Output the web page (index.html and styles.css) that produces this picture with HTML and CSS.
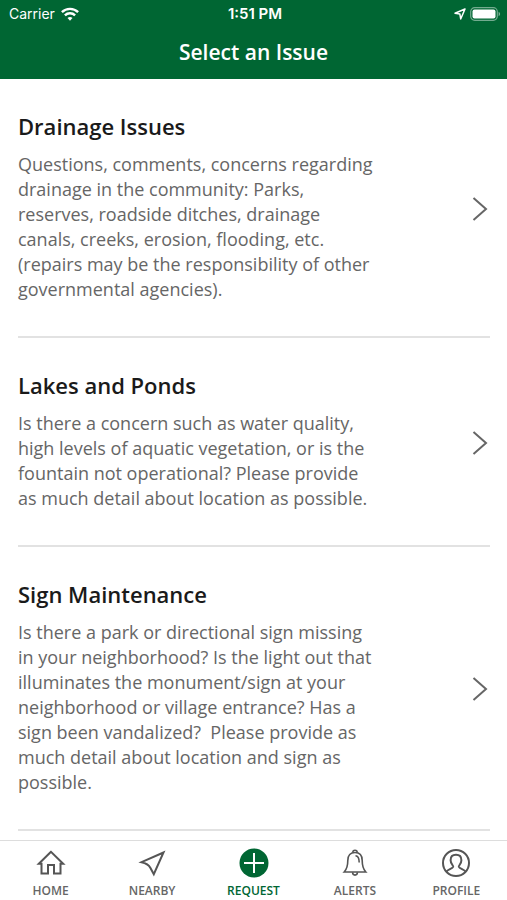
FILE: index.html
```html
<!DOCTYPE html>
<html lang="en">
  <head>
    <meta charset="UTF-8" />
    <meta name="viewport" content="width=device-width, initial-scale=1.0" />
    <title>Select an Issue</title>
    <link rel="stylesheet" href="styles.css">
  </head>
  <body>
    <header class="header">
      <div class="status">
        <div class="status-left">
          <span>Carrier</span>
          <svg width="18" height="14" viewBox="0 0 18 14" fill="none" stroke="#fff" stroke-width="2.4">
            <path d="M0.9 5.2a11.5 11.5 0 0 1 16.2 0" />
            <path d="M3.9 8.4a7.2 7.2 0 0 1 10.2 0" />
            <path d="M9 13.7l-2.5-2.6a3.6 3.6 0 0 1 5 0z" fill="#fff" stroke="none" />
          </svg>
        </div>
        <span class="time">1:51 PM</span>
        <div class="status-right">
          <svg width="12" height="12" viewBox="0 0 12 12" fill="none" stroke="#fff" stroke-width="1.5" stroke-linejoin="round">
            <path d="M11 1L1 5.3l4.9.8.8 4.9z" />
          </svg>
          <svg width="31" height="14" viewBox="0 0 31 14">
            <rect x="0.7" y="0.7" width="26.6" height="12.6" rx="4" fill="none" stroke="#fff" stroke-opacity="0.45" stroke-width="1.2" />
            <rect x="2.5" y="2.5" width="23" height="9" rx="2" fill="#fff" />
            <path d="M28.6 4.8c2 .8 2 3.6 0 4.4z" fill="#fff" fill-opacity="0.5" />
          </svg>
        </div>
      </div>
      <h1>Select an Issue</h1>
    </header>

    <main class="list">
      <a class="issue" href="#drainage">
        <div class="issue-text">
          <h2>Drainage Issues</h2>
          <p>Questions, comments, concerns regarding drainage in the community: Parks, reserves, roadside ditches, drainage canals, creeks, erosion, flooding, etc. (repairs may be the responsibility of other governmental agencies).</p>
        </div>
        <svg class="chevron" width="16" height="24" viewBox="0 0 16 24"><path d="M1.5 1L14 12L1.5 23" /></svg>
      </a>
      <a class="issue" href="#lakes">
        <div class="issue-text">
          <h2>Lakes and Ponds</h2>
          <p>Is there a concern such as water quality, high levels of aquatic vegetation, or is the fountain not operational? Please provide as much detail about location as possible.</p>
        </div>
        <svg class="chevron" width="16" height="24" viewBox="0 0 16 24"><path d="M1.5 1L14 12L1.5 23" /></svg>
      </a>
      <a class="issue" href="#signs">
        <div class="issue-text">
          <h2>Sign Maintenance</h2>
          <p>Is there a park or directional sign missing in your neighborhood? Is the light out that illuminates the monument/sign at your neighborhood or village entrance? Has a sign been vandalized?&nbsp; Please provide as much detail about location and sign as possible.</p>
        </div>
        <svg class="chevron" width="16" height="24" viewBox="0 0 16 24"><path d="M1.5 1L14 12L1.5 23" /></svg>
      </a>
    </main>

    <nav class="tabs">
      <a class="tab" href="#home">
        <svg width="30" height="30" viewBox="0 0 30 30">
          <path d="M15 3.800L2.800 15.800H5.500V25.500H12V17h6v8.500h6.500V15.800h2.700z" />
        </svg>
        <span>HOME</span>
      </a>
      <a class="tab" href="#nearby">
        <svg width="30" height="30" viewBox="0 0 30 30">
          <path d="M26.500 4.500L4.500 14.200c5.500 1.300 7.500 3 8.800 5.500l3.500 6.500z" />
        </svg>
        <span>NEARBY</span>
      </a>
      <a class="tab active" href="#request">
        <svg width="30" height="30" viewBox="0 0 30 30">
          <circle class="disc" cx="15" cy="15" r="14.5" />
          <path class="plus" d="M15 5v20M5 15h20" />
        </svg>
        <span>REQUEST</span>
      </a>
      <a class="tab" href="#alerts">
        <svg class="bell" width="30" height="30" viewBox="0 0 30 30">
          <path d="M4.200 24C6.800 21.200 7.800 19 7.800 12.500C7.800 7.500 10.500 4.500 15 4.500S22.200 7.500 22.200 12.500C22.200 19 23.200 21.200 25.800 24z" />
          <path d="M12.800 4.500C12.800 1.500 17.200 1.500 17.200 4.500M12.600 24.300C12.600 28 17.400 28 17.400 24.300M15.500 7.800C18.300 8 19.200 10 19.200 14.500" />
        </svg>
        <span>ALERTS</span>
      </a>
      <a class="tab" href="#profile">
        <svg width="30" height="30" viewBox="0 0 30 30">
          <circle cx="15" cy="15" r="13" />
          <path d="M5.500 23.500C7 21.300 11.500 20.800 12.200 18.700C12.500 17.500 9.600 16 9.600 12.200C9.600 8.800 11.800 6.800 15 6.800S20.400 8.800 20.400 12.200C20.400 16 17.500 17.500 17.800 18.700C18.500 20.800 23 21.300 24.500 23.500" />
        </svg>
        <span>PROFILE</span>
      </a>
    </nav>
  </body>
</html>
```
FILE: styles.css
```css
* {
  box-sizing: border-box;
}
body {
  display: flex;
  flex-direction: column;
  min-height: 100vh;
  margin: 0;
  background: #fff;
  color: #666;
  font-family: "Open Sans", sans-serif;
}
h1,
h2,
p {
  margin: 0;
}
a {
  color: inherit;
  text-decoration: none;
}
.header {
  height: 79px;
  background: #006633;
  color: #fff;
}
.status {
  display: grid;
  grid-template-columns: 1fr auto 1fr;
  align-items: center;
  height: 27px;
  padding: 0 6px 0 9px;
  font-family: Inter, sans-serif;
  font-size: 14px;
}
.status-left,
.status-right {
  display: flex;
  align-items: center;
  gap: 6px;
}
.status-right {
  justify-content: flex-end;
  gap: 4px;
}
.time {
  font-size: 15px;
  font-weight: 600;
}
.header h1 {
  font-size: 21px;
  font-weight: 600;
  line-height: 50px;
  text-align: center;
}
.list {
  flex: 1;
  padding: 0 17px 0 18px;
}
.issue {
  display: flex;
  align-items: center;
  justify-content: space-between;
  gap: 94px;
  padding: 32px 2px 34px 0;
  border-bottom: 2px solid #e2e2e2;
}
.issue-text {
  flex: 1;
}
.issue h2 {
  margin-bottom: 11px;
  color: #1a1a1a;
  font-size: 22px;
  font-weight: 600;
  line-height: 30px;
}
.issue p {
  font-size: 18px;
  line-height: 25px;
}
.chevron {
  flex: none;
  margin-top: 4px;
  fill: none;
  stroke: #666;
  stroke-width: 2;
}
.tabs {
  display: flex;
  position: sticky;
  bottom: 0;
  height: 60px;
  border-top: 1px solid #ddd;
  background: #fff;
}
.tab {
  display: flex;
  flex: 1;
  flex-direction: column;
  align-items: center;
  gap: 5px;
  padding-top: 7px;
  font-size: 12px;
  font-weight: 600;
  line-height: 16px;
}
.tab svg {
  fill: none;
  stroke: #555;
  stroke-width: 2;
}
.tab .bell {
  stroke-width: 1.6;
}
.tab.active {
  color: #006633;
}
.tab .disc {
  fill: #006633;
  stroke: none;
}
.tab .plus {
  stroke: #fff;
}
```
